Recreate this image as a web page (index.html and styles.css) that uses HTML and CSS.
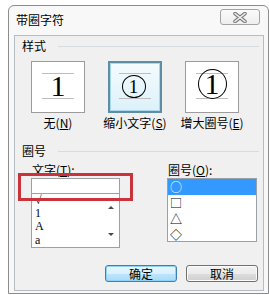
FILE: index.html
```html
<!DOCTYPE html>
<html>
<head>
<meta charset="utf-8">
<title>带圈字符</title>
<link rel="stylesheet" href="styles.css">
</head>
<body>

<div class="dlg">
  <div class="dlg-title">
    <span class="dlg-caption">带圈字符</span>
    <span class="dlg-close"><svg width="14" height="11" viewBox="0 0 14 11"><path d="M2 1.5L12 9.5M12 1.5L2 9.5" stroke="#7a7a7a" stroke-width="3.6" stroke-linecap="round"/><path d="M2 1.5L12 9.5M12 1.5L2 9.5" stroke="#f2f2f2" stroke-width="1.6" stroke-linecap="round"/></svg></span>
  </div>

  <div class="dlg-body">
    <div class="grp"><span>样式</span></div>
    <ul class="styles">
      <li>
        <div class="pick"><div class="guide"><span class="num">1</span></div></div>
        <span class="pick-label">无(<u>N</u>)</span>
      </li>
      <li>
        <div class="pick pick-on"><div class="guide"><span class="ring ring-small"><span class="num num-small">1</span></span></div></div>
        <span class="pick-label">缩小文字(<u>S</u>)</span>
      </li>
      <li>
        <div class="pick"><div class="guide"><span class="ring ring-big"><span class="num">1</span></span></div></div>
        <span class="pick-label">增大圈号(<u>E</u>)</span>
      </li>
    </ul>

    <div class="grp"><span>圈号</span></div>
    <div class="lower">
      <div class="col">
        <label>文字(<u>T</u>):</label>
        <div class="combo-edit"></div>
        <div class="combo-list">
          <ul class="chars"><li>√</li><li>1</li><li>A</li><li>a</li></ul>
          <div class="sbar"><span class="arr arr-up"></span><span class="arr arr-down"></span></div>
        </div>
      </div>
      <div class="col col-right">
        <label>圈号(<u>O</u>):</label>
        <ul class="encl">
          <li class="sel">○</li>
          <li>□</li>
          <li>△</li>
          <li>◇</li>
        </ul>
      </div>
    </div>

    <div class="btns">
      <button class="btn btn-default">确定</button>
      <button class="btn">取消</button>
    </div>

    <div class="mark"></div>
  </div>
</div>

</body>
</html>
```

FILE: styles.css
```css
body {margin:0; background:#fff; color:#000; font:12px "Noto Sans CJK SC", sans-serif; overflow:hidden;}
ul {list-style:none; margin:0; padding:0;}
u {text-decoration:underline; text-underline-offset:1px;}

/* window frame */
.dlg {margin:5px 0 0 8px; width:261px; box-sizing:border-box; border:1px solid #8d8d8d; border-radius:6px 6px 0 0; background:#f8f8f8; padding:0 4px 2px 5px;}
.dlg-title {height:29px; display:flex; justify-content:space-between; align-items:flex-start;}
.dlg-caption {margin:7px 0 0 2px; line-height:14px;}
.dlg-close {margin:3px 4px 0 0; width:40px; height:16px; box-sizing:border-box; border:1px solid #a3a3a3; border-radius:3px; background:linear-gradient(#fbfbfb, #eeeeee); display:flex; align-items:center; justify-content:center;}

/* client area */
.dlg-body {position:relative; border:1px solid #b4bcc4; background:#f0f0f0; padding:3px 4px 8px 0;}
.grp {display:flex; align-items:center; height:14px; line-height:14px; margin-left:7px;}
.grp::after {content:""; flex:1; margin-left:12px; border-top:1px solid #d6dbe0;}
.grp + .lower {margin-top:5px;}

/* style picks */
.styles {display:grid; grid-template-columns:repeat(3, 54px); column-gap:23px; margin:8px 0 14px 16px;}
.styles li {display:flex; flex-direction:column; align-items:center;}
.pick {width:54px; height:52px; box-sizing:border-box; border:1px solid #9c9c9c; background:#fff; display:flex; justify-content:center; padding-top:11px;}
.pick-on {border:2px solid #5f8ea4; box-shadow:inset 0 0 0 1px #a9d9ee; background:linear-gradient(#f4fbfe, #dcf1fa); padding-top:10px;}
.pick-label {margin-top:3px; line-height:14px; white-space:nowrap;}
.guide {width:32px; height:24px; border-top:1px solid #bdbdbd; border-bottom:1px solid #bdbdbd; display:flex; align-items:center; justify-content:center;}
.num {font:30px/30px "Liberation Serif", serif;}
.num-small {font-size:19px; line-height:19px;}
.ring {flex:none; border:1px solid #000; border-radius:50%; display:flex; align-items:center; justify-content:center; box-sizing:border-box;}
.ring-small {width:24px; height:23px; margin-left:-3px;}
.ring-big {width:29px; height:30px; margin-bottom:5px;}

/* lower lists */
.lower {display:flex; justify-content:space-between; width:226px; margin-left:16px; height:85px;}
.col {width:89px; display:flex; flex-direction:column;}
.col-right {width:90px;}
.col label {line-height:14px; padding-left:1px; margin-bottom:1px; white-space:nowrap;}
.combo-edit {height:16px; box-sizing:border-box; border:1px solid #9aa0a8; background:#fff;}
.combo-list {height:54px; box-sizing:border-box; border:1px solid #9aa0a8; border-top:none; background:#fff; display:flex; overflow:hidden;}
.chars {flex:1; margin-top:0; padding-left:3px; font:12px/13.2px "Liberation Serif", serif;}
.sbar {width:16px; display:flex; flex-direction:column; justify-content:space-between;}
.arr {height:26px; display:flex; align-items:center; justify-content:center;}
.arr::before {content:""; border-left:3px solid transparent; border-right:3px solid transparent;}
.arr-up::before {border-bottom:3px solid #4a4a4a;}
.arr-down::before {border-top:3px solid #4a4a4a;}
.encl {height:64px; box-sizing:border-box; border:1px solid #9aa0a8; background:#fff;}
.encl li {height:16px; line-height:16px; padding-left:2px; font-size:12px;}
.encl li.sel {background:#3399ff; color:#fff;}

/* buttons */
.btns {display:flex; justify-content:flex-end; gap:9px; margin:17px 1px 0 0;}
.btn {width:72px; height:17px; padding:0; border:1px solid #707070; border-radius:3px; font:12px/15px "Noto Sans CJK SC", sans-serif; color:#000; background:linear-gradient(#f2f2f2 0%, #ebebeb 50%, #dddddd 51%, #cfcfcf 100%); box-shadow:inset 0 0 0 1px #fbfbfb;}
.btn-default {border-color:#3c7fb1; background:linear-gradient(#eaf6fd 0%, #d9f0fc 50%, #bee6fd 51%, #a7d9f5 100%); box-shadow:inset 0 0 0 1px #8ed2f7;}

/* red annotation box drawn over the text field */
.mark {position:absolute; left:3px; top:137px; width:115px; height:28px; box-sizing:border-box; border:3px solid #c9333b;}
```
